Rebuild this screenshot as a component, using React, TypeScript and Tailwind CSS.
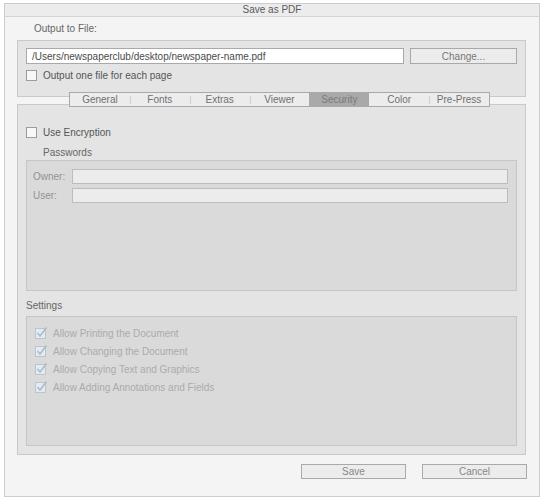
import React from 'react'

const font = { fontFamily: '"Liberation Sans", Arial, sans-serif' }

const tabs = ['General', 'Fonts', 'Extras', 'Viewer', 'Security', 'Color', 'Pre-Press']
const active = 'Security'

const permissions = [
  'Allow Printing the Document',
  'Allow Changing the Document',
  'Allow Copying Text and Graphics',
  'Allow Adding Annotations and Fields',
]

function Checkbox() {
  return <span className="block h-[11px] w-[11px] shrink-0 border border-[#9c9c9c] bg-[#f7f7f7]" />
}

function DisabledCheck() {
  return (
    <svg width="13" height="12" viewBox="0 0 13 12" className="shrink-0">
      <rect x="0.5" y="1.5" width="10" height="10" fill="#e6eaee" stroke="#b9c5cf" />
      <polyline
        points="2.5,6 5,9 11.5,0.5"
        fill="none"
        stroke="#a7bccd"
        strokeWidth="1.6"
      />
    </svg>
  )
}

function Tabs() {
  return (
    <div className="relative z-10 ml-[52px] -mt-[5px] flex h-[15px] w-[421px] border border-[#a9a9a9] bg-[#ececec]">
      {tabs.map((t, i) => {
        const sel = t === active
        const prevSel = i > 0 && tabs[i - 1] === active
        const showSep = i > 0 && !sel && !prevSel
        return (
          <div
            key={t}
            className={
              sel
                ? 'relative flex h-full w-[60px] items-center justify-center bg-[#a9a9a9] text-[10px] leading-none text-[#7a7a7a]'
                : 'relative flex h-full w-[60px] items-center justify-center text-[10px] leading-none text-[#707070]'
            }
          >
            {showSep && (
              <span className="absolute left-0 top-[3px] h-[8px] w-px bg-[#cfcfcf]" />
            )}
            {t}
          </div>
        )
      })}
    </div>
  )
}

export default function App() {
  return (
    <div className="h-[500px] w-[545px] bg-white pl-[4px] pt-[3px]" style={font}>
      <div className="flex h-[494px] w-[536px] flex-col border border-[#cdcdcd] bg-[#f4f4f4]">
        {/* title bar */}
        <div className="flex h-[13px] items-center justify-center border-b border-[#d4d4d4] bg-[#ececec] text-[10px] leading-none text-[#5a5a5a]">
          Save as PDF
        </div>

        <div className="flex flex-col pl-[12px] pr-[13px]">
          <div className="flex h-[23px] items-center pl-[17px] text-[10px] text-[#666]">
            Output to File:
          </div>

          {/* output group */}
          <div className="h-[57px] border border-[#c9c9c9] bg-[#e4e4e4] px-[8px] pt-[7px]">
            <div className="flex gap-[6px]">
              <div className="flex h-[16px] w-[378px] items-center border border-[#a9a9a9] bg-white pl-[5px] text-[10px] text-[#4a4a4a]">
                /Users/newspaperclub/desktop/newspaper-name.pdf
              </div>
              <div className="flex h-[16px] flex-1 items-center justify-center border border-[#a9a9a9] bg-[#ececec] text-[10px] text-[#777]">
                Change...
              </div>
            </div>
            <div className="mt-[5px] flex h-[12px] items-center gap-[6px]">
              <Checkbox />
              <span className="text-[10px] text-[#555]">Output one file for each page</span>
            </div>
          </div>

          <Tabs />

          {/* main panel */}
          <div className="-mt-[3px] flex h-[351px] flex-col border border-[#c9c9c9] bg-[#e4e4e4] px-[8px]">
            <div className="mt-[21px] flex h-[12px] items-center gap-[6px]">
              <Checkbox />
              <span className="text-[10px] text-[#555]">Use Encryption</span>
            </div>
            <div className="mt-[9px] pl-[17px] text-[10px] leading-[12px] text-[#666]">Passwords</div>

            <div className="mt-[1px] h-[131px] border border-[#c6c6c6] bg-[#dadada] pl-[6px] pr-[8px] pt-[8px]">
              <div className="flex flex-col gap-[4px]">
                <div className="flex items-center">
                  <span className="w-[39px] text-[10px] text-[#939393]">Owner:</span>
                  <div className="h-[15px] flex-1 border border-[#bdbdbd] bg-[#ececec]" />
                </div>
                <div className="flex items-center">
                  <span className="w-[39px] text-[10px] text-[#939393]">User:</span>
                  <div className="h-[15px] flex-1 border border-[#bdbdbd] bg-[#ececec]" />
                </div>
              </div>
            </div>

            <div className="mt-[9px] text-[10px] leading-[12px] text-[#666]">Settings</div>

            <div className="mt-[4px] flex h-[130px] flex-col gap-[6px] border border-[#c6c6c6] bg-[#dadada] pl-[8px] pt-[10px]">
              {permissions.map((p) => (
                <div key={p} className="flex h-[12px] items-center gap-[5px]">
                  <DisabledCheck />
                  <span className="text-[10px] text-[#ababab]">{p}</span>
                </div>
              ))}
            </div>
          </div>

          {/* buttons */}
          <div className="mt-[9px] flex justify-end gap-[16px]">
            <div className="flex h-[15px] w-[105px] items-center justify-center border border-[#a9a9a9] bg-[#ececec] text-[10px] text-[#888]">
              Save
            </div>
            <div className="-mr-px flex h-[15px] w-[105px] items-center justify-center border border-[#a9a9a9] bg-[#ececec] text-[10px] text-[#888]">
              Cancel
            </div>
          </div>
        </div>
      </div>
    </div>
  )
}
